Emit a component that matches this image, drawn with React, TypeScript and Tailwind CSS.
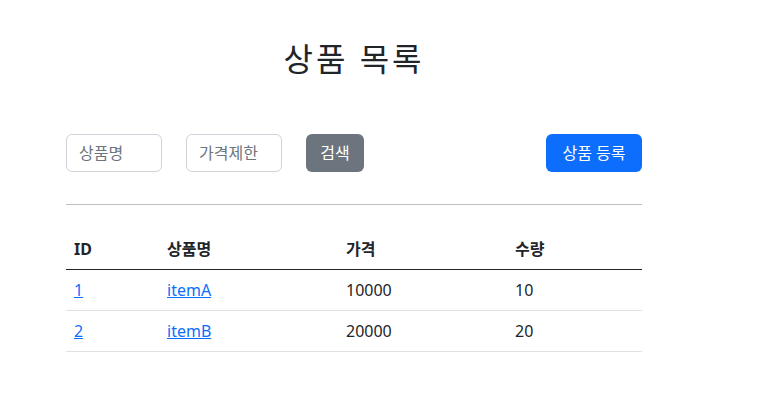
import React from 'react';

const items = [
  { id: 1, name: 'itemA', price: 10000, quantity: 10 },
  { id: 2, name: 'itemB', price: 20000, quantity: 20 },
];

const App: React.FC = () => {
  return (
    <div
      className="min-h-[413px] bg-white text-[#212529] text-base"
      style={{ fontFamily: '"Noto Sans", "Noto Sans CJK KR", sans-serif' }}
    >
      <div className="ml-[54px] w-[600px] px-3">
        <div className="pt-[40px] pb-[48px] text-center">
          <h2 className="text-[32px] leading-[1.2] font-normal tracking-[3px] mb-2">상품 목록</h2>
        </div>

        <div className="flex items-center">
          <div className="flex gap-6">
            <input
              type="text"
              placeholder="상품명"
              className="w-[96px] h-[38px] px-3 border border-[#ced4da] rounded-[6px] placeholder:text-[#6c757d] outline-none"
            />
            <input
              type="text"
              placeholder="가격제한"
              className="w-[96px] h-[38px] px-3 border border-[#ced4da] rounded-[6px] placeholder:text-[#6c757d] outline-none"
            />
            <button className="w-[58px] h-[38px] bg-[#6c757d] text-white rounded-[6px]">검색</button>
          </div>
          <button className="ml-auto w-[96px] h-[38px] bg-[#0d6efd] text-white rounded-[6px]">상품 등록</button>
        </div>

        <hr className="mt-[32px] mb-[24px] border-t border-[#bfbfbf]" />

        <table className="w-full border-collapse text-left">
          <thead>
            <tr className="border-b border-[#212529]">
              <th className="w-[93px] p-2 font-bold h-[40px]">ID</th>
              <th className="w-[179px] p-2 font-bold">상품명</th>
              <th className="w-[169px] p-2 font-bold">가격</th>
              <th className="p-2 font-bold">수량</th>
            </tr>
          </thead>
          <tbody>
            {items.map((item) => (
              <tr key={item.id} className="border-b border-[#dee2e6]">
                <td className="p-2 h-[41px]">
                  <a href="#" className="text-[#0d6efd] underline">{item.id}</a>
                </td>
                <td className="p-2">
                  <a href="#" className="text-[#0d6efd] underline">{item.name}</a>
                </td>
                <td className="p-2">{item.price}</td>
                <td className="p-2">{item.quantity}</td>
              </tr>
            ))}
          </tbody>
        </table>
      </div>
    </div>
  );
};

export default App;
